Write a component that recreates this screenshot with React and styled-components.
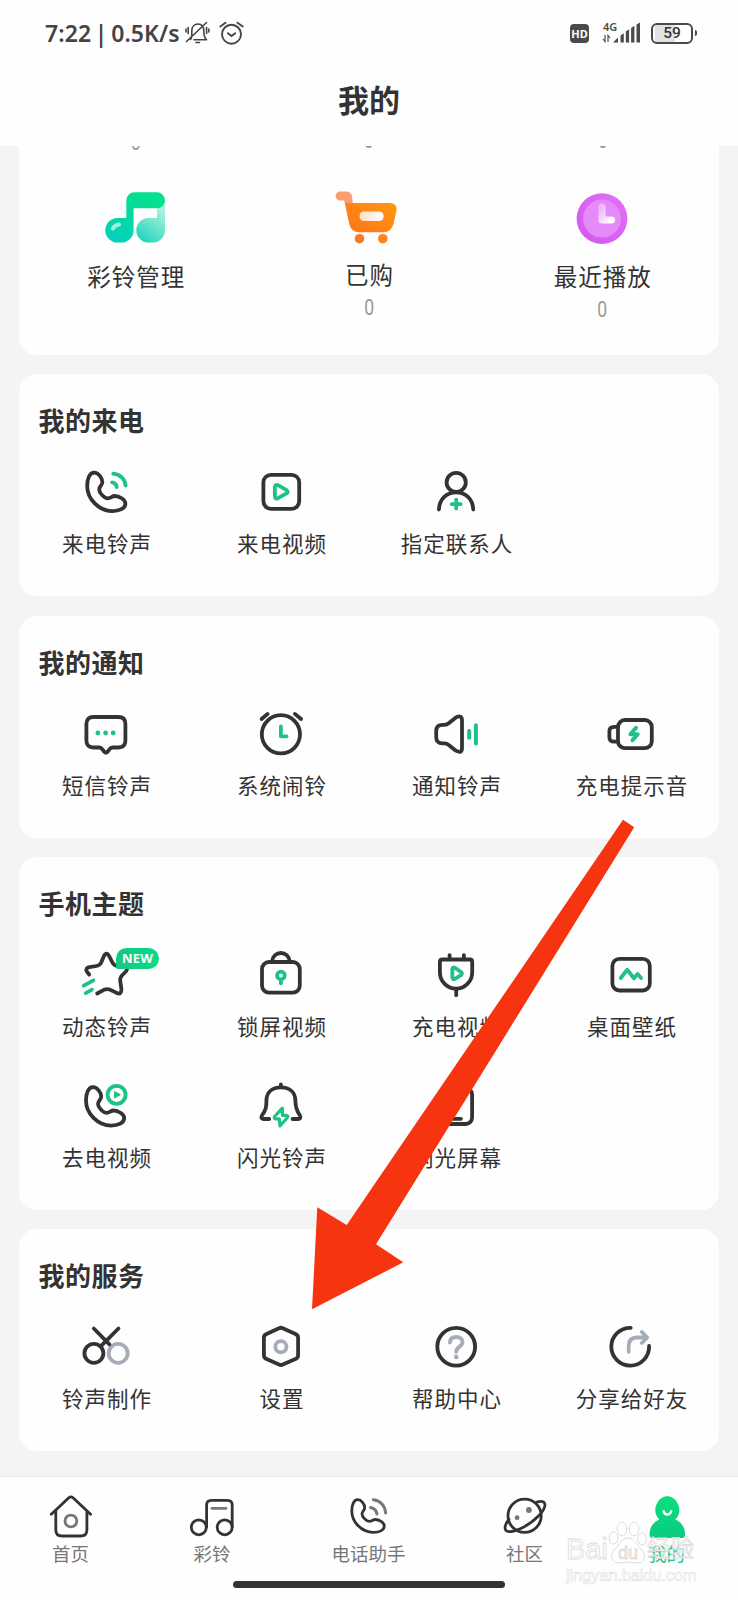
import styled, { createGlobalStyle, css } from "styled-components";

const DARK = "#333333";
const GREEN = "#1fc184";
const GREY = "#a6adb8";
const MID = "#777777";

const GlobalStyle = createGlobalStyle`
  *, *::before, *::after {
    box-sizing: border-box;
  }
  body {
    margin: 0;
    background: #f4f4f4;
    color: ${DARK};
    font-family: "Noto Sans CJK SC", "Noto Sans", sans-serif;
  }
`;

const Screen = styled.div`
  position: relative;
  display: flex;
  flex-direction: column;
  width: 738px;
  height: 1600px;
  overflow: hidden;
  background: #f4f4f4;
`;

const Header = styled.header`
  flex: none;
  height: 146px;
  background: #fefefe;
`;

const StatusBar = styled.div`
  display: flex;
  align-items: center;
  justify-content: space-between;
  height: 66px;
  padding: 0 41px 0 45px;
`;

const StatusGroup = styled.div`
  display: flex;
  align-items: center;
`;

const StatusText = styled.span`
  width: 140px;
  font-family: "Noto Sans", sans-serif;
  font-size: 23px;
  font-weight: 600;
  line-height: 30px;
  letter-spacing: 0.1px;
  word-spacing: -2.5px;
  white-space: nowrap;
  color: #444;
`;

const HdBadge = styled.span`
  width: 19px;
  height: 19px;
  margin-right: 13px;
  border-radius: 4px;
  background: #4a4a4a;
  color: #fff;
  font-family: "Noto Sans", sans-serif;
  font-size: 11px;
  font-weight: 700;
  line-height: 19px;
  text-align: center;
`;

const Signal = styled.div`
  display: grid;
  grid-template-columns: 38px;
  margin-right: 11px;
`;

const Battery = styled.div`
  display: flex;
  align-items: center;
  gap: 1.5px;

  &::after {
    content: "";
    width: 2.5px;
    height: 6px;
    border-radius: 0 2px 2px 0;
    background: #4a4a4a;
  }
`;

const BatteryBody = styled.span`
  width: 42px;
  height: 21px;
  border: 2.5px solid #4a4a4a;
  border-radius: 6px;
  background: linear-gradient(to right, #fff 2px, #e2e2e2 2px, #e2e2e2 22px, #fff 22px);
  font-family: Roboto, sans-serif;
  font-size: 15.5px;
  font-weight: 500;
  line-height: 17px;
  text-align: center;
`;

const PageTitle = styled.h1`
  margin: 16px 0 0;
  font-size: 31px;
  font-weight: 700;
  line-height: 34px;
  text-align: center;
`;

const Content = styled.main`
  flex: 1;
  display: flex;
  flex-direction: column;
  gap: 19.2px;
  min-height: 0;
  padding: 0 19px;
  overflow: hidden;
`;

const Card = styled.section`
  flex: none;
  padding-bottom: 11.7px;
  border-radius: 18px;
  background: #fefefe;

  ${({ $cut }) =>
    $cut &&
    css`
      height: 209px;
      padding-bottom: 0;
      border-radius: 0 0 18px 18px;
      overflow: hidden;
    `}
`;

const CardTitle = styled.h2`
  height: 80px;
  margin: 0;
  padding: 30px 19.5px 0;
  font-size: 26px;
  font-weight: 700;
  line-height: 32px;
  letter-spacing: 0.5px;
`;

const Grid = styled.div`
  display: grid;
  grid-template-columns: repeat(${({ $columns }) => $columns}, 1fr);
`;

const Cell = styled.div`
  display: flex;
  flex-direction: column;
  align-items: center;
  height: 130.6px;
  padding-top: 8px;
`;

const IconBox = styled.div`
  position: relative;
  width: 60px;
  height: 60px;
`;

const Label = styled.span`
  margin-top: 6px;
  padding-left: 1px;
  font-size: 21.5px;
  line-height: 30px;
  letter-spacing: 1px;
  white-space: nowrap;
`;

const NewBadge = styled.span`
  position: absolute;
  top: 3px;
  left: 39.5px;
  width: 43px;
  height: 21px;
  border-radius: 10.5px 10.5px 10.5px 2px;
  background: linear-gradient(to right, #1ac583, #06dc86);
  color: #fff;
  font-family: "Noto Sans", sans-serif;
  font-size: 13px;
  font-weight: 700;
  line-height: 21px;
  letter-spacing: 0.2px;
  text-align: center;
`;

const HiddenRow = styled.div`
  height: 39px;
`;

const Count = styled.span`
  display: block;
  margin-top: ${({ $top = 0 }) => $top}px;
  font-family: Roboto, sans-serif;
  font-size: 22px;
  font-weight: 400;
  line-height: 24px;
  text-align: center;
  color: #999;
  transform: scaleX(0.8);
`;

const BigCell = styled.div`
  display: flex;
  flex-direction: column;
  align-items: center;
`;

const BigLabel = styled.span`
  margin: ${({ $raised }) => ($raised ? 14 : 16)}px 0 7px;
  padding-left: 1px;
  font-size: 23.5px;
  line-height: 30px;
  letter-spacing: 1px;
`;

const TabBar = styled.nav`
  flex: none;
  display: flex;
  flex-direction: column;
  align-items: center;
  height: 124px;
  border-top: 1px solid #ececec;
  background: #fefefe;
`;

const Tabs = styled.div`
  display: grid;
  grid-template-columns: 141px 142px 171px 141px 143px;
  width: 100%;
  padding-top: 14px;
`;

const Tab = styled.div`
  display: flex;
  flex-direction: column;
  align-items: center;
  font-size: 18.5px;
  line-height: 24px;
  color: ${({ $active }) => ($active ? GREEN : MID)};
`;

const HomeBar = styled.div`
  width: 272px;
  height: 7px;
  margin-top: 16px;
  border-radius: 4px;
  background: ${DARK};
`;

const Pointer = styled.svg`
  position: absolute;
  top: 819px;
  left: 311px;
`;

const Watermark = styled.div`
  position: absolute;
  top: 1518px;
  left: 566px;
  width: 134px;
  color: rgba(255, 255, 255, 0.6);
  font-family: "Liberation Sans", "Noto Sans CJK SC", sans-serif;
  white-space: nowrap;
  -webkit-text-stroke: 0.8px #dcdcdc;
`;

const WatermarkRow = styled.div`
  display: flex;
  align-items: flex-end;
  height: 48px;
  font-size: 29px;
  line-height: 34px;
`;

const WatermarkCn = styled.span`
  font-size: 23.5px;
`;

const WatermarkUrl = styled.div`
  font-size: 16.5px;
  line-height: 18px;
  letter-spacing: -0.15px;
  -webkit-text-stroke-width: 0.5px;
`;

const Line = styled.svg`
  display: block;
  fill: none;
  stroke: ${({ $color = DARK }) => $color};
  stroke-width: ${({ $weight = 3.8 }) => $weight};
  stroke-linecap: round;
  stroke-linejoin: round;
`;

const Icon = ({ children }) => (
  <Line width="60" height="60" viewBox="0.6 0 60 60">
    {children}
  </Line>
);

const TabIcon = ({ children }) => (
  <Line $weight={2.8} width="50" height="50" viewBox="0 0 50 50">
    {children}
  </Line>
);

const HANDSET =
  "M17.8 10.7C13 10.7 10.8 17 10.8 24C10.8 37 22.5 49.1 36 49.1C43 49.1 49 46.5 49 41.5C49 37.5 42.5 34 38.5 34C35.5 34 34.5 36.3 31.5 36.3C28 36.3 22.8 31 22.8 27.5C22.8 24 26 23.5 26 20C26 16 22 10.7 17.8 10.7Z";

const icons = {
  callTone: (
    <>
      <path d={HANDSET} />
      <path stroke={GREEN} d="M36.8 11.7C43.5 12.2 48.8 17.2 49.2 23.7M35.7 20.3C38 20.6 40 22.5 40.3 25" />
    </>
  ),
  callVideo: (
    <>
      <rect x="12" y="12.8" width="35.8" height="34" rx="7.5" />
      <path stroke={GREEN} d="M23.5 25.2V34.2Q23.7 37.6 26.6 36.2L35.2 31.4Q37.4 29.8 35.2 28.2L26.6 23.2Q23.7 21.8 23.5 25.2Z" />
    </>
  ),
  contact: (
    <>
      <circle cx="29.8" cy="20.4" r="9.6" />
      <path d="M12.5 47.5C13 36.5 20.5 30.3 29.7 30.3S46.4 36.5 46.9 47.5" />
      <path stroke={GREEN} d="M29.8 37.6V46.6M25.3 42.1H34.3" />
    </>
  ),
  sms: (
    <>
      <path d="M17 13H42Q49 13 49 20V36.5Q49 43.5 42 43.5H36C34.5 43.5 34 44 33 45.3L31 48Q29.5 49.5 28 48L26 45.3C25 44 24.5 43.5 23 43.5H17Q10 43.5 10 36.5V20Q10 13 17 13Z" />
      <g fill={GREEN} stroke="none">
        <circle cx="21.5" cy="29" r="2.4" />
        <circle cx="29.2" cy="29" r="2.4" />
        <circle cx="36.8" cy="29" r="2.4" />
      </g>
    </>
  ),
  alarm: (
    <>
      <circle cx="29.5" cy="30.3" r="19.1" />
      <path d="M10.2 15L16.2 9.9M43.5 9.9L49.7 15" />
      <path stroke={GREEN} d="M29.5 22.5V32.3H35.2" />
    </>
  ),
  speaker: (
    <>
      <path d="M16 20.8H18Q20.5 20.8 22.3 19.3L29.5 13.5Q35.6 10.5 35.6 16.5V44Q35.6 50 29.5 46.7L22.3 41Q20.5 39.4 18 39.4H16Q9.8 39.4 9.8 33V27Q9.8 20.8 16 20.8Z" />
      <path stroke={GREEN} strokeWidth="4" d="M42.8 27V33.7M49.5 21.2V39.4" />
    </>
  ),
  battery: (
    <>
      <rect x="16.6" y="16" width="33.8" height="28.2" rx="7" />
      <path d="M16.5 22.8H13Q8 22.8 8 27V33.5Q8 37.6 13 37.6H16.5" />
      <path stroke={GREEN} strokeWidth="4" d="M34.6 23.8L29 30.2H36.3L31 36.2" />
    </>
  ),
  star: (
    <>
      <path d="M12.8 29.5L10.3 26.3Q9 23 13 22.2L20 21Q23.3 20.5 24.8 17.5L27.3 11.5Q30.2 6 33 11.5L36 17.5Q37.5 20.5 41 21L48 22.2Q52.5 23 49.5 26.5L45.5 30.5Q43.3 33 43.9 36.5L45 44Q45.2 50 40.5 48L33.5 44.6Q30.5 43.4 27.5 44.8L20.8 48.5" />
      <path stroke={GREEN} d="M7.4 40.7L17 35.3M9.4 48.2L15.6 44.7" />
    </>
  ),
  lock: (
    <>
      <rect x="10.6" y="17" width="37.8" height="30.6" rx="7" />
      <path d="M20.8 16.3C21.3 11 25 8 29.5 8S37.7 11 38.2 16.3" />
      <circle stroke={GREEN} cx="29.5" cy="30.5" r="3.8" />
      <path stroke={GREEN} d="M29.5 35V38.3" />
    </>
  ),
  plug: (
    <>
      <path d="M16 14.5H43.5Q45.8 14.5 45.8 17V27.5A16.1 16.1 0 0 1 13.5 27.5V17Q13.5 14.5 16 14.5Z" />
      <path d="M23.2 10.1V13.5M37.5 10.1V13.5M29.8 45V50.2" />
      <path stroke={GREEN} d="M25.9 24.2V31.9Q26.1 35.1 28.5 33.8L34.6 30.2Q36.5 28.6 34.6 27L28.5 22.9Q26.1 21.6 25.9 24.2Z" />
    </>
  ),
  wallpaper: (
    <>
      <rect x="11" y="13.8" width="37.4" height="31.7" rx="7" />
      <path stroke={GREEN} d="M19.4 33L25.8 24.7L32.5 33.2L36.2 29L39.7 33" />
    </>
  ),
  outVideo: (
    <>
      <path d={HANDSET} transform="translate(-1.2 .5)" />
      <circle stroke={GREEN} cx="40.2" cy="18.8" r="9" />
      <path fill={GREEN} stroke={GREEN} strokeWidth="1.2" d="M38.3 15.8V21.8L43.7 18.8Z" />
    </>
  ),
  bell: (
    <>
      <path d="M29.5 8.3V11M17.8 43H12Q9 43 10.5 39.5C14.5 34 15 31 15 25C15 16 21 11.4 29.5 11.4S44 16 44 25C44 31 44.7 34 48.5 39.5Q50 43 47 43H41.2" />
      <path stroke={GREEN} strokeWidth="3.2" d="M30.8 32.2L23 40.8Q22.3 42.6 24.3 42.8H27.8L28.6 50L36.2 41.3Q37 39.6 35 39.3H31.2Z" />
    </>
  ),
  flashScreen: (
    <>
      <rect x="14.5" y="12" width="31.2" height="36" rx="6.5" />
      <path d="M24.5 42.8H34.5" />
    </>
  ),
  scissors: (
    <>
      <circle stroke={GREY} cx="41.8" cy="36.3" r="9.5" />
      <circle cx="17.5" cy="36.3" r="9.5" />
      <path d="M17.4 11.5L33 27.4M42.1 11.5L25 28.6" />
    </>
  ),
  settings: (
    <>
      <path d="M27.6 11.3Q29.5 10.2 31.4 11.3L44.6 17.2Q46.7 18.3 46.7 20.7V38.3Q46.7 40.7 44.6 41.8L31.4 47.5Q29.5 48.6 27.6 47.5L14.6 41.8Q12.5 40.7 12.5 38.3V20.7Q12.5 18.3 14.6 17.2Z" />
      <circle stroke={GREY} cx="29.5" cy="29.7" r="5.6" />
    </>
  ),
  help: (
    <>
      <circle cx="29.8" cy="29.7" r="18.9" />
      <path stroke={GREY} d="M23.5 25.5C23.7 21.5 26.2 20 30 20C34 20 36.1 22.3 36.1 25.2C36.1 29.8 30 29.5 29.8 34.8" />
      <circle fill={GREY} stroke="none" cx="29.8" cy="39.9" r="2.3" />
    </>
  ),
  share: (
    <>
      <path d="M29.3 10.8A18.9 18.9 0 1 0 47.7 29" />
      <path stroke={GREY} d="M27.3 34.8V29Q27.3 20.5 35.5 20.5H45M40.4 15L45.8 20.5L40.4 26" />
    </>
  ),
};

const sections = [
  {
    title: "我的来电",
    items: [
      { icon: "callTone", label: "来电铃声" },
      { icon: "callVideo", label: "来电视频" },
      { icon: "contact", label: "指定联系人" },
    ],
  },
  {
    title: "我的通知",
    items: [
      { icon: "sms", label: "短信铃声" },
      { icon: "alarm", label: "系统闹铃" },
      { icon: "speaker", label: "通知铃声" },
      { icon: "battery", label: "充电提示音" },
    ],
  },
  {
    title: "手机主题",
    items: [
      { icon: "star", label: "动态铃声", badge: "NEW" },
      { icon: "lock", label: "锁屏视频" },
      { icon: "plug", label: "充电视频" },
      { icon: "wallpaper", label: "桌面壁纸" },
      { icon: "outVideo", label: "去电视频" },
      { icon: "bell", label: "闪光铃声" },
      { icon: "flashScreen", label: "闪光屏幕" },
    ],
  },
  {
    title: "我的服务",
    items: [
      { icon: "scissors", label: "铃声制作" },
      { icon: "settings", label: "设置" },
      { icon: "help", label: "帮助中心" },
      { icon: "share", label: "分享给好友" },
    ],
  },
];

const MusicArt = () => (
  <svg width="70" height="60" viewBox="0 -0.6 70 60">
    <defs>
      <linearGradient id="note" x1="0" y1="1" x2="0.6" y2="0">
        <stop offset="0" stopColor="#04cfc0" />
        <stop offset="1" stopColor="#04e18d" />
      </linearGradient>
      <linearGradient id="noteLight" x1="0" y1="1" x2="0.5" y2="0">
        <stop offset="0" stopColor="#14d0b8" />
        <stop offset="1" stopColor="#a9f3dc" />
      </linearGradient>
    </defs>
    <path
      fill="url(#noteLight)"
      d="M56 16H64V44.7A12.3 12.3 0 0 1 51.7 57H47.6A12.3 12.3 0 0 1 47.6 32.4H56Z"
    />
    <path
      fill="url(#note)"
      d="M33.3 6.7H56A8 8 0 0 1 56 22.7H32.6V44.7A12.3 12.3 0 0 1 20.3 57H16.6A12.3 12.3 0 0 1 16.6 32.4H25.3V14.7A8 8 0 0 1 33.3 6.7Z"
    />
    <path d="M12 43Q13.8 39.6 18 39" fill="none" stroke="#9ff0dc" strokeWidth="4" strokeLinecap="round" />
  </svg>
);

const CartArt = () => (
  <svg width="70" height="60" viewBox="-0.8 -0.6 70 60">
    <defs>
      <linearGradient id="cart" x1="0" y1="1" x2="1" y2="0">
        <stop offset="0" stopColor="#ff7418" />
        <stop offset="1" stopColor="#ff9712" />
      </linearGradient>
      <linearGradient id="slot">
        <stop offset="0" stopColor="#ffe0c6" />
        <stop offset="1" stopColor="#fff" />
      </linearGradient>
    </defs>
    <path d="M5.3 6H11Q16.5 6 17.2 11L18.2 19H10.3L9.3 15H5.3A4.5 4.5 0 0 1 5.3 6Z" fill="#fb9d70" />
    <path d="M10 17.3H54.5Q63 17.3 61.6 25.5L58.8 38Q56.5 46.7 48.5 46.7H24.5Q16.5 46.7 14.6 39Z" fill="url(#cart)" />
    <rect x="24.8" y="26" width="24" height="9.4" rx="4.2" fill="url(#slot)" />
    <circle cx="24.7" cy="53.1" r="4.8" fill="#fb7a20" />
    <circle cx="48" cy="53.1" r="4.8" fill="#fb8420" />
  </svg>
);

const ClockArt = () => (
  <svg width="70" height="60" viewBox="0 0 70 60">
    <defs>
      <linearGradient id="face" x1="0" y1="1" x2="1" y2="0">
        <stop offset="0" stopColor="#d257ee" />
        <stop offset="1" stopColor="#e370f8" />
      </linearGradient>
      <linearGradient id="hand" x1="0" y1="0" x2="1" y2="1">
        <stop offset="0" stopColor="#f2b5fd" />
        <stop offset="1" stopColor="#fff" />
      </linearGradient>
    </defs>
    <circle cx="35" cy="33.6" r="25.4" fill="url(#face)" />
    <circle cx="35" cy="33.6" r="19" fill="#e68afa" />
    <path d="M35 22V35H44.5" fill="none" stroke="url(#hand)" strokeWidth="7.2" strokeLinecap="round" strokeLinejoin="round" />
  </svg>
);

const tabs = [
  {
    label: "首页",
    icon: (
      <>
        <path d="M5.3 23.3L22.8 6.8Q24.9 5 27 6.8L44.6 23.3M9.8 20V39Q9.8 45 16 45H34.5Q40.9 45 40.9 39V20" />
        <circle stroke={MID} cx="24.9" cy="30" r="5.9" />
      </>
    ),
  },
  {
    label: "彩铃",
    icon: (
      <>
        <circle cx="11.8" cy="36.3" r="7.5" />
        <circle cx="37.7" cy="36.3" r="7.5" />
        <path d="M19.6 36V14Q19.6 9.3 24.5 9.3H40.3Q45.2 9.3 45.2 14V36" />
        <path stroke={MID} d="M25 17.3H39" />
      </>
    ),
  },
  {
    label: "电话助手",
    icon: (
      <>
        <path d={HANDSET} strokeWidth="3.3" transform="translate(-1.4 -.4) scale(.85)" />
        <path stroke={MID} strokeWidth="3" d="M29.4 8.7C36.6 9.5 41.1 15 41.6 22M26.6 16.5C30.1 17.2 32.4 19.5 32.9 23" />
      </>
    ),
  },
  {
    label: "社区",
    icon: (
      <>
        <circle cx="24.6" cy="24.8" r="16.6" />
        <path d="M36.7 11.2Q43.4 9.2 44.7 12.6C46.6 18.5 35.4 30 22.9 36.5C13.9 41 6.8 42 5.4 38.5C4.4 35.5 6.2 31.5 9 28.2" />
        <circle fill={MID} stroke="none" cx="28.9" cy="19" r="2.9" />
        <circle fill={MID} stroke="none" cx="17.1" cy="26.7" r="2.4" />
      </>
    ),
  },
  {
    label: "我的",
    active: true,
    icon: (
      <>
        <defs>
          <linearGradient id="me" x1="0" y1="0" x2="0" y2="1">
            <stop offset="0" stopColor="#08df80" />
            <stop offset="1" stopColor="#0ccb7e" />
          </linearGradient>
        </defs>
        <path
          stroke="none"
          fill="url(#me)"
          d="M25.3 5A13.2 13.8 0 0 1 33.3 28.5C39.8 31.5 43.1 36.5 43.1 43.5Q43.1 47 39.8 47H10.8Q7.5 47 7.5 43.5C7.5 36.5 10.8 31.5 17.3 28.5A13.2 13.8 0 0 1 25.3 5Z"
        />
        <path stroke="#fff" strokeWidth="2.4" d="M21.6 20.2C22.6 24.6 28 24.6 29.2 20.2" />
      </>
    ),
  },
];

const MutedBell = () => (
  <Line $weight={1.6} $color="#444" width="25" height="24" viewBox="0 0 25 24">
    <path d="M5.5 18.5C7 16.5 6.8 14 6.8 10C6.8 5.5 9.5 3 13 3S18.8 5.5 18.8 10C18.8 14 19 16.5 21.5 18.8H9M11 21.5H14.5M21.5 1.5L1.5 20.5M3.2 6.5V12.5M1 8V11M21.6 6.5V12.5M23.8 8V11" />
  </Line>
);

const StatusAlarm = () => (
  <Line $weight={1.9} $color="#444" width="34" height="26" viewBox="-8.5 0 34 26">
    <circle cx="13" cy="14.2" r="9.5" />
    <path d="M9.5 13.2L13 16L16.7 13.2M1.8 6.5L7 2.8M19 2.8L24.2 6.5" />
  </Line>
);

const SignalBars = () => (
  <svg width="38" height="34" viewBox="0 -6 38 34">
    <text x="1" y="8.8" fontFamily="Noto Sans" fontSize="11" fontWeight="600" fill="#4a4a4a">
      4G
    </text>
    <path d="M1 17L3 19.5V13M6 20V13.5L8 16" fill="none" stroke="#4a4a4a" strokeWidth="1.2" />
    <path d="M11 20.5L16 15.5V20.5ZM18.5 13.5L21.8 11.3V20.5H18.5ZM23.8 9.5L27.1 7.3V20.5H23.8ZM29.1 6L32.4 3.8V20.5H29.1ZM34.5 2.5L38 .5V20.5H34.5Z" fill="#4a4a4a" />
  </svg>
);

const Paw = () => (
  <svg width="39" height="46" viewBox="0 0 39 46" fill="rgba(255,255,255,.6)" stroke="#dcdcdc" strokeWidth="1">
    <ellipse cx="5.5" cy="18" rx="4.3" ry="6" />
    <ellipse cx="14" cy="9" rx="4.8" ry="6.8" />
    <ellipse cx="26" cy="9" rx="4.8" ry="6.8" />
    <ellipse cx="34" cy="19" rx="4.3" ry="6" />
    <path d="M20 18C13 18 12 25 7 29C1 34 3 43 11 43C15 43 17 42 20 42S26 43 30 43C37 43 39 34 33 29C28 25 27 18 20 18Z" />
    <text x="10" y="39" fontFamily="Liberation Sans" fontSize="18">
      du
    </text>
  </svg>
);

function Section({ title, items }) {
  return (
    <Card>
      <CardTitle>{title}</CardTitle>
      <Grid $columns={4}>
        {items.map(({ icon, label, badge }) => (
          <Cell key={label}>
            <IconBox>
              <Icon>{icons[icon]}</Icon>
              {badge && <NewBadge>{badge}</NewBadge>}
            </IconBox>
            <Label>{label}</Label>
          </Cell>
        ))}
      </Grid>
    </Card>
  );
}

export default function App() {
  return (
    <Screen>
      <GlobalStyle />
      <Header>
        <StatusBar>
          <StatusGroup>
            <StatusText>7:22 | 0.5K/s</StatusText>
            <MutedBell />
            <StatusAlarm />
          </StatusGroup>
          <StatusGroup>
            <HdBadge>HD</HdBadge>
            <Signal>
              <SignalBars />
            </Signal>
            <Battery>
              <BatteryBody>59</BatteryBody>
            </Battery>
          </StatusGroup>
        </StatusBar>
        <PageTitle>我的</PageTitle>
      </Header>

      <Content>
        <Card $cut>
          {/* counts of the row scrolled under the header */}
          <HiddenRow>
            <Grid $columns={3}>
              <Count $top={-15}>0</Count>
              <Count $top={-17}>0</Count>
              <Count $top={-17}>0</Count>
            </Grid>
          </HiddenRow>
          <Grid $columns={3}>
            <BigCell>
              <MusicArt />
              <BigLabel>彩铃管理</BigLabel>
            </BigCell>
            <BigCell>
              <CartArt />
              <BigLabel $raised>已购</BigLabel>
              <Count>0</Count>
            </BigCell>
            <BigCell>
              <ClockArt />
              <BigLabel>最近播放</BigLabel>
              <Count>0</Count>
            </BigCell>
          </Grid>
        </Card>
        {sections.map((section) => (
          <Section key={section.title} {...section} />
        ))}
      </Content>

      <TabBar>
        <Tabs>
          {tabs.map(({ label, icon, active }) => (
            <Tab key={label} $active={active}>
              <TabIcon>{icon}</TabIcon>
              {label}
            </Tab>
          ))}
        </Tabs>
        <HomeBar />
      </TabBar>

      <Pointer width="324" height="492" viewBox="311 819 324 492">
        <path fill="#f63410" d="M623 819.7L634.2 827.3L376 1244.3L403.3 1262.3L312 1309.3L317.3 1207.3L346.7 1225Z" />
      </Pointer>

      <Watermark>
        <WatermarkRow>
          Bai
          <Paw />
          <WatermarkCn>经验</WatermarkCn>
        </WatermarkRow>
        <WatermarkUrl>jingyan.baidu.com</WatermarkUrl>
      </Watermark>
    </Screen>
  );
}
